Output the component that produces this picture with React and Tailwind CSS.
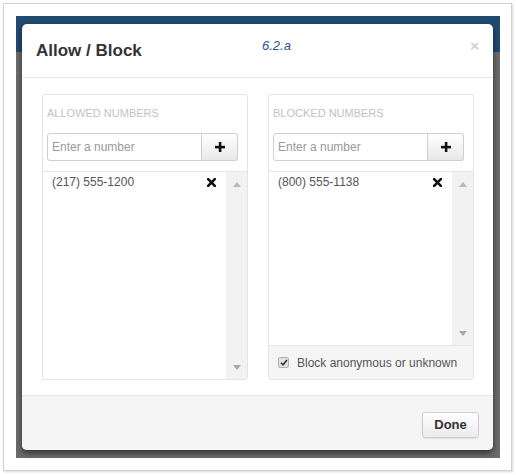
import React from "react";

const font = { fontFamily: '"Liberation Sans", Arial, sans-serif' };

const RemoveIcon = () => (
  <svg width="9" height="9" viewBox="0 0 9 9" className="block">
    <path d="M1.2 1.2 L7.8 7.8 M7.8 1.2 L1.2 7.8" stroke="#111" strokeWidth="2.6" strokeLinecap="square" />
  </svg>
);

const PlusIcon = () => (
  <svg width="10" height="10" viewBox="0 0 10 10" className="block">
    <rect x="3.8" y="0" width="2.6" height="10" fill="#111" />
    <rect x="0" y="3.8" width="10" height="2.6" fill="#111" />
  </svg>
);

const Arrow = ({ down }) => (
  <svg width="8" height="5" viewBox="0 0 8 5" className="block">
    {down ? <path d="M0 0 L8 0 L4 5 Z" fill="#a8a8a8" /> : <path d="M0 5 L8 5 L4 0 Z" fill="#b8b8b8" />}
  </svg>
);

const NumberPanel = ({ title, numbers, footer }) => {
  return (
    <div className="w-[206px] h-[286px] border border-[#e4e4e4] rounded-[3px] flex flex-col bg-white">
      <div className="px-[4px] pt-[11px] pb-[10px]">
        <div className="text-[11px] leading-[14px] text-[#c2c2c2] uppercase">{title}</div>
        <div className="mt-[13px] flex h-[28px] w-[191px]">
          <input
            placeholder="Enter a number"
            className="flex-1 min-w-0 h-full border border-[#cfcfcf] rounded-l-[3px] px-[4px] text-[12px] text-[#555] placeholder:text-[#9a9a9a] outline-none"
            style={font}
          />
          <button className="w-[36px] h-full border border-l-0 border-[#cfcfcf] rounded-r-[3px] bg-[linear-gradient(to_bottom,#ffffff,#e8e8e8)] flex items-center justify-center">
            <PlusIcon />
          </button>
        </div>
      </div>
      <div className="flex-1 flex border-t border-[#e6e6e6] min-h-0">
        <div className="flex-1 pt-[2px]">
          {numbers.map((n) => (
            <div key={n} className="flex items-center justify-between pl-[9px] pr-[10px] h-[16px]">
              <span className="text-[12px] leading-[16px] text-[#555]">{n}</span>
              <RemoveIcon />
            </div>
          ))}
        </div>
        <div className="w-[21px] bg-[#f2f2f2] flex flex-col items-center justify-between pt-[10px] pb-[9px]">
          <Arrow />
          <Arrow down />
        </div>
      </div>
      {footer}
    </div>
  );
};

const App = () => {
  return (
    <div className="w-[516px] h-[475px] bg-white pt-[3px] pl-[3px]" style={font}>
      <div className="w-[509px] h-[468px] border border-[#d0d0d0] shadow-[1px_1px_2px_rgba(0,0,0,0.15)] pl-[12px] pt-[12px]">
        <div className="w-[484px] h-[442px] bg-[linear-gradient(to_bottom,#1f4b70_36px,#6c6c6c_36px)] pl-[6px] pt-[8px]">
          <div className="relative w-[471px] h-[426px] bg-white rounded-[5px] overflow-hidden shadow-[0_3px_6px_rgba(0,0,0,0.55)] flex flex-col">
            <div className="relative flex items-start justify-between pl-[14px] pr-[14px] pt-[17px] pb-[16px] border-b border-[#e8e8e8]">
              <h3 className="text-[17px] leading-[20px] font-bold text-[#333]">Allow / Block</h3>
              <span className="absolute left-[240px] top-[14px] text-[13px] leading-[16px] italic text-[#2b4f98]">6.2.a</span>
              <span className="text-[15px] leading-[12px] font-bold text-[#cfcfcf] mt-[-1px]">×</span>
            </div>
            <div className="flex gap-[20px] pl-[20px] pt-[16px] pb-[15px]">
              <NumberPanel title="Allowed numbers" numbers={["(217) 555-1200"]} />
              <NumberPanel
                title="Blocked numbers"
                numbers={["(800) 555-1138"]}
                footer={
                  <div className="h-[34px] border-t border-[#e6e6e6] bg-[#f5f5f5] flex items-center pl-[9px] gap-[8px]">
                    <div className="w-[11px] h-[11px] border border-[#b0b0b0] rounded-[2px] bg-[#e2e2e2] flex items-center justify-center">
                      <svg width="8" height="7" viewBox="0 0 8 7" className="block">
                        <path d="M1 3.8 L3 5.8 L7 1" stroke="#333" strokeWidth="1.6" fill="none" />
                      </svg>
                    </div>
                    <span className="text-[12px] leading-[16px] text-[#555]">Block anonymous or unknown</span>
                  </div>
                }
              />
            </div>
            <div className="flex-1 border-t border-[#e6e6e6] bg-[#f5f5f5] flex justify-end items-start pr-[14px] pt-[16px]">
              <button className="w-[57px] h-[26px] border border-[#cdcdcd] rounded-[3px] bg-[linear-gradient(to_bottom,#ffffff,#ebebeb)] shadow-[0_1px_1px_rgba(0,0,0,0.08)] text-[13px] font-bold text-[#333]">
                Done
              </button>
            </div>
          </div>
        </div>
      </div>
    </div>
  );
};

export default App;
